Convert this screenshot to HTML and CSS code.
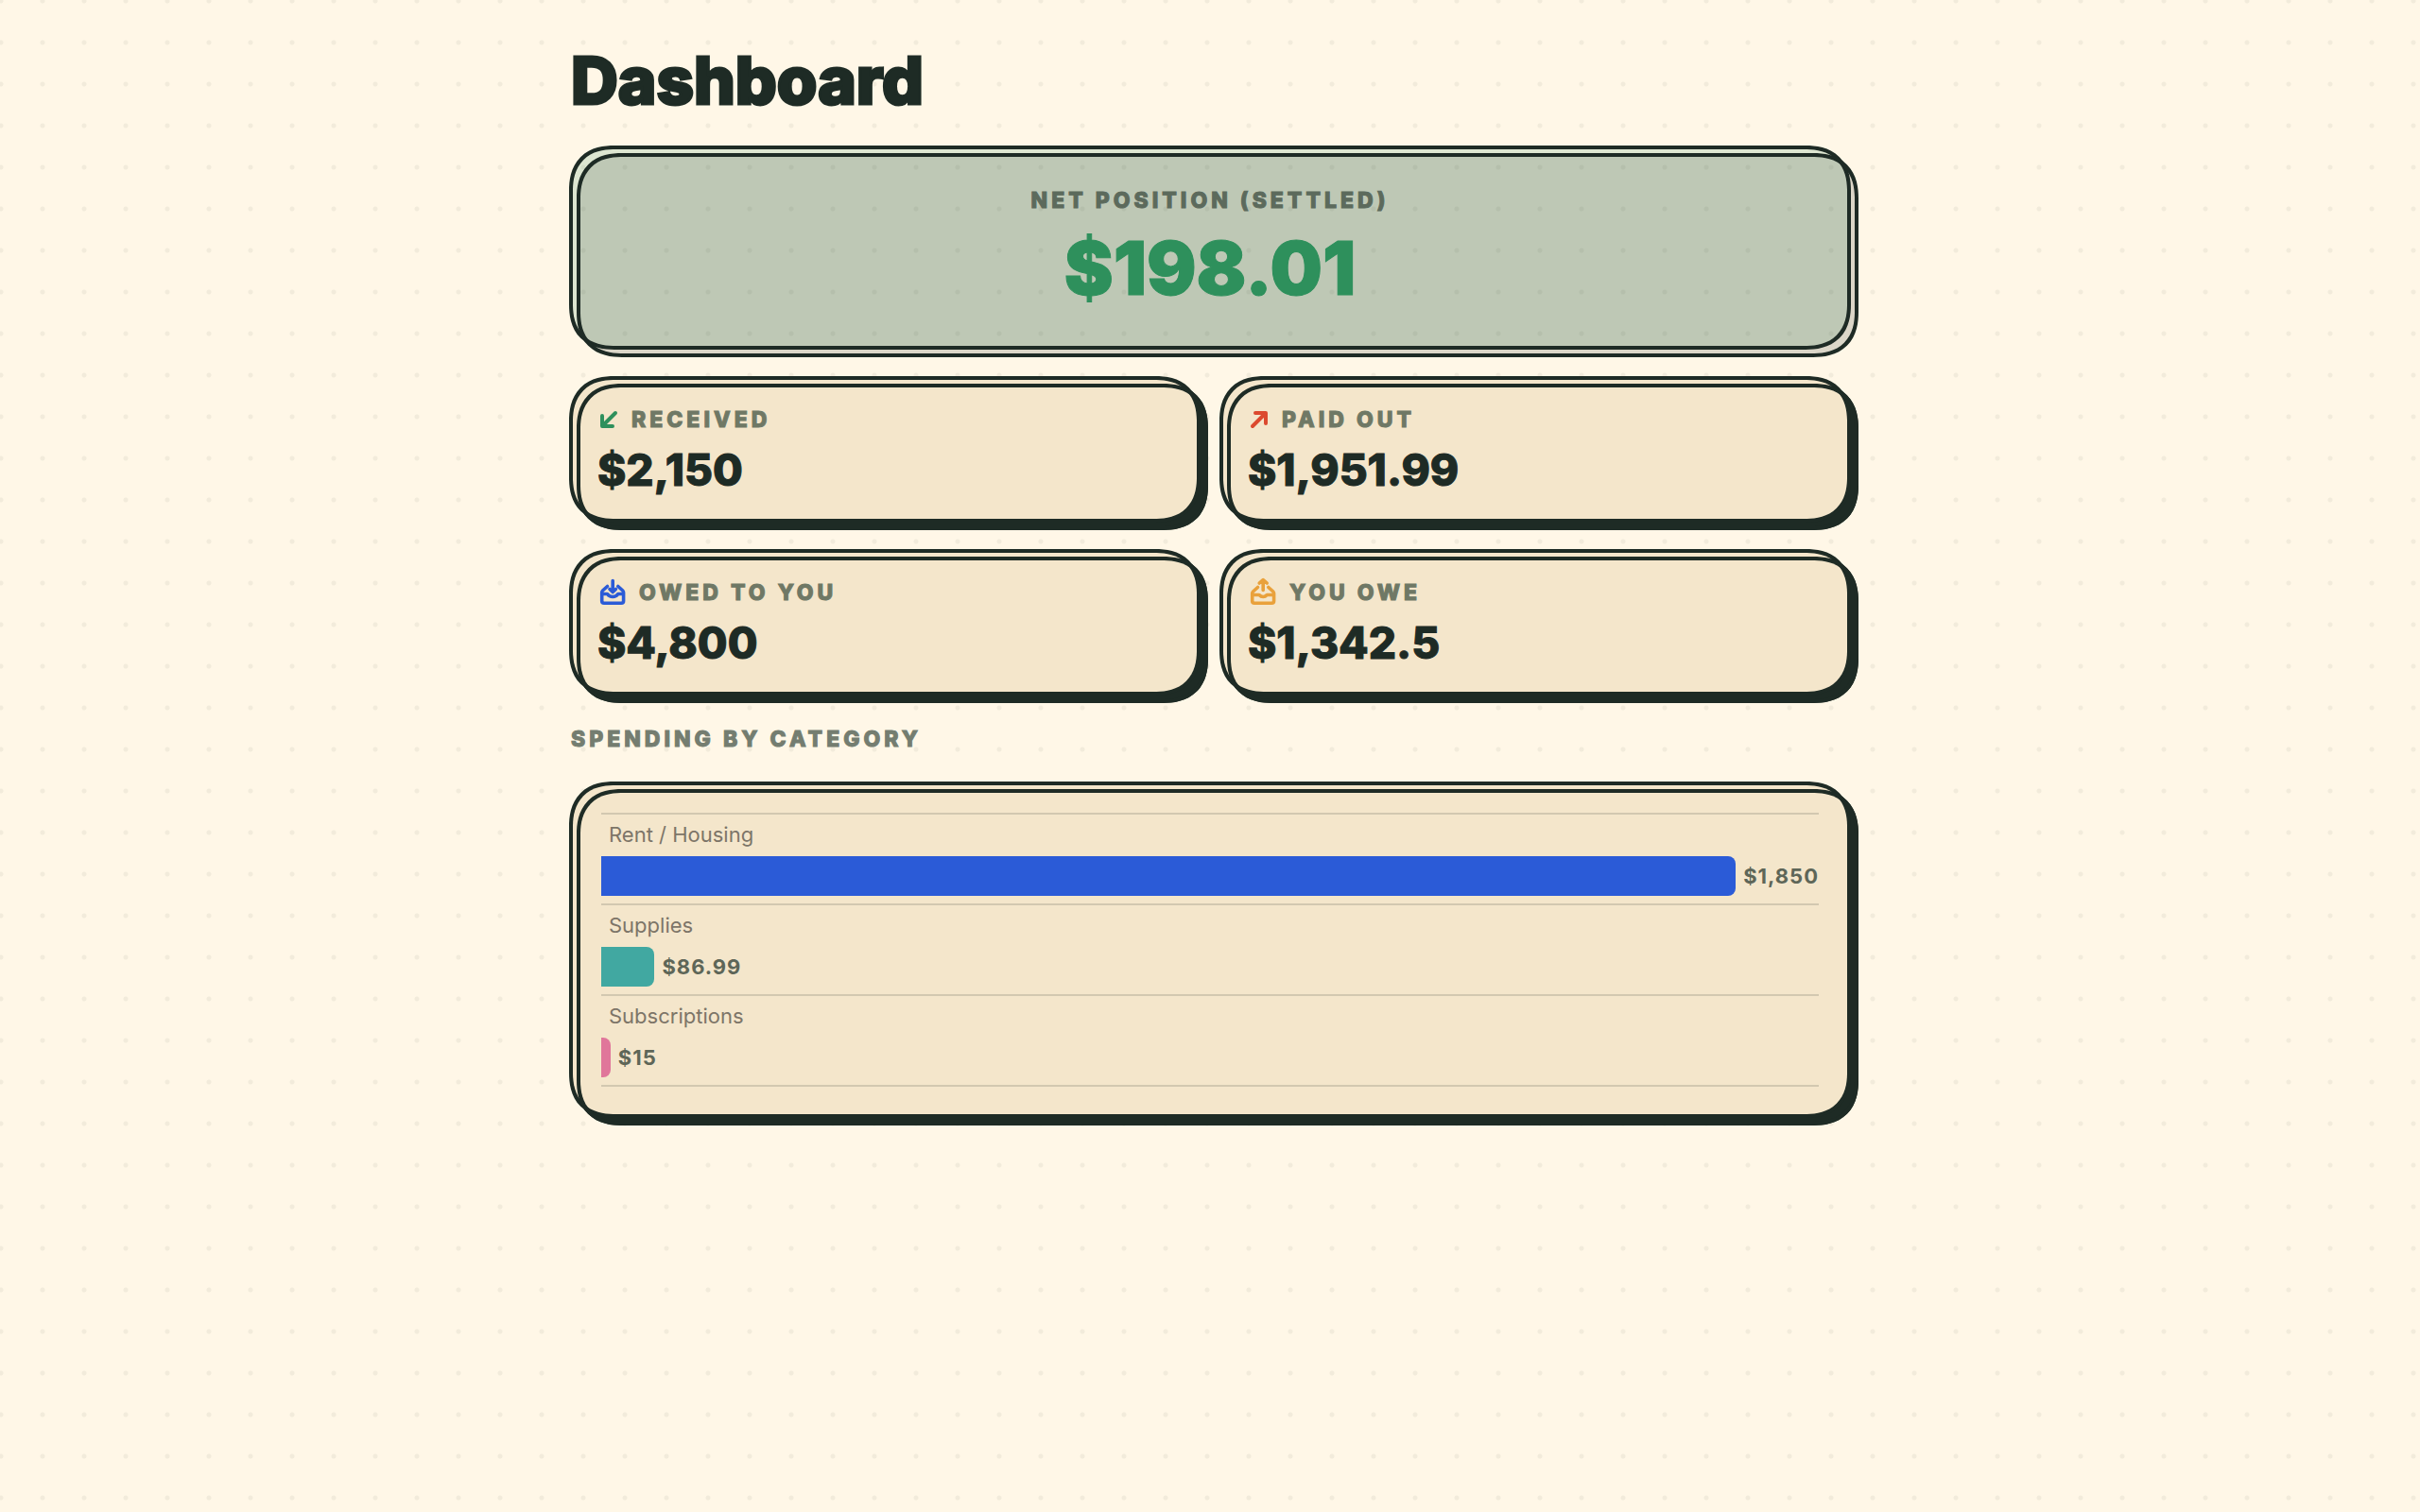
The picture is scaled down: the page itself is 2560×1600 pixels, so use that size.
FILE: index.html
```html
<!DOCTYPE html>
<html lang="en">
<head>
    <meta charset="UTF-8">
    <meta name="viewport" content="width=device-width, initial-scale=1.0">
    <title>Dashboard</title>
    <link rel="stylesheet" href="styles.css">
</head>
<body>
    <main class="container">
        <h1 class="page-title">Dashboard</h1>

        <section class="card card-net">
            <h2 class="label">Net position (settled)</h2>
            <p class="net-amount">$198.01</p>
        </section>

        <div class="stats">
            <section class="card stat">
                <h2 class="label">
                    <svg class="icon-arrow received" viewBox="0 0 24 24" aria-hidden="true"><path d="M19 5 L6 18 M5 8 V19 H16"/></svg>
                    Received
                </h2>
                <p class="amount">$2,150</p>
            </section>
            <section class="card stat">
                <h2 class="label">
                    <svg class="icon-arrow paid" viewBox="0 0 24 24" aria-hidden="true"><path d="M5 19 L18 6 M8 5 H19 V16"/></svg>
                    Paid out
                </h2>
                <p class="amount">$1,951.99</p>
            </section>
            <section class="card stat">
                <h2 class="label">
                    <svg class="icon-tray owed" viewBox="0 0 32 32" aria-hidden="true"><path d="M10.5 9.5 L5.5 14 Q4.7 15 4.7 16 V25 Q4.7 27.2 7 27.2 H25.3 Q27.6 27.2 27.6 25 V16 Q27.6 15 26.8 14 L21.8 9.5 M5 17.5 H10.5 Q12.5 20.5 16.2 20.5 Q19.8 20.5 21.8 17.5 H27.3 M16.2 3.5 V15 M13 12.5 L16.2 15.5 L19.4 12.5"/></svg>
                    Owed to you
                </h2>
                <p class="amount">$4,800</p>
            </section>
            <section class="card stat">
                <h2 class="label">
                    <svg class="icon-tray owe" viewBox="0 0 32 32" aria-hidden="true"><path d="M10.5 10.5 L5.5 15 Q4.7 16 4.7 17 V25 Q4.7 27.2 7 27.2 H25.3 Q27.6 27.2 27.6 25 V17 Q27.6 16 26.8 15 L21.8 10.5 M5 18.5 H12 Q13.8 20.5 16.2 20.5 Q18.5 20.5 20.3 18.5 H27.3 M16.2 13.5 V3 M12.2 6 L16.2 2.5 L20.2 6"/></svg>
                    You owe
                </h2>
                <p class="amount">$1,342.5</p>
            </section>
        </div>

        <h2 class="label section-title">Spending by category</h2>
        <section class="card card-chart">
            <ul class="chart">
                <li class="chart-row">
                    <span class="category">Rent / Housing</span>
                    <div class="bar-line"><div class="bar rent" style="width: 93.25%"></div><span class="value">$1,850</span></div>
                </li>
                <li class="chart-row">
                    <span class="category">Supplies</span>
                    <div class="bar-line"><div class="bar supplies" style="width: 4.38%"></div><span class="value">$86.99</span></div>
                </li>
                <li class="chart-row">
                    <span class="category">Subscriptions</span>
                    <div class="bar-line"><div class="bar subscriptions" style="width: 0.76%"></div><span class="value">$15</span></div>
                </li>
            </ul>
        </section>
    </main>
</body>
</html>
```
FILE: styles.css
```css
* {
    box-sizing: border-box;
}
body {
    margin: 0;
    font-family: Inter, sans-serif;
    color: #1e2b25;
    background-color: #fff7e7;
    background-image: radial-gradient(circle, #f2ebdb 2px, transparent 3px);
    background-size: 44px 44px;
    background-position: -21px -21px;
}
h1, h2, p, ul {
    margin: 0;
    padding: 0;
}
.container {
    max-width: 1356px;
    margin: 0 auto;
    padding: 44px 0;
}
/* the stroke thickens and rounds the heavy text */
.page-title, .net-amount, .amount, .label {
    font-weight: 800;
    stroke-linejoin: round;
    -webkit-text-stroke: 1px currentColor;
}
.page-title {
    font-size: 69px;
    line-height: 82px;
    margin-bottom: 28px;
    padding-left: 2px;
    -webkit-text-stroke-width: 3px;
}
.card {
    position: relative;
    isolation: isolate;
    border: 4px solid #1e2b25;
    border-radius: 48px;
    corner-shape: superellipse(1.25);
    background-color: #f4e6cb;
    box-shadow: 8px 8px 0 #1e2b25;
}
/* second outline, shifted down and right */
.card::before {
    content: "";
    position: absolute;
    z-index: -1;
    inset: 4px -12px -12px 4px;
    border: 4px solid #1e2b25;
    border-radius: 48px;
    corner-shape: superellipse(1.25);
    pointer-events: none;
}
.card-net {
    min-height: 216px;
    padding: 36px 26px;
    text-align: center;
    background-color: rgba(46, 144, 92, 0.16);
    box-shadow: none;
}
.card-net::before {
    background-color: rgba(30, 43, 37, 0.16);
}
.label {
    display: flex;
    align-items: center;
    gap: 12px;
    font-size: 23px;
    line-height: 36px;
    letter-spacing: 4px;
    text-transform: uppercase;
    color: #6f7865;
}
.card-net .label {
    justify-content: center;
    color: #5c6a5c;
}
.net-amount {
    font-size: 78px;
    line-height: 92px;
    font-weight: 900;
    margin-top: 8px;
    color: #2e905c;
}
.stats {
    display: grid;
    grid-template-columns: 1fr 1fr;
    gap: 28px 20px;
    margin-top: 28px;
}
.stat {
    min-height: 155px;
    padding: 24px 26px;
}
.amount {
    font-size: 46px;
    line-height: 56px;
    margin-top: 7px;
}
svg {
    fill: none;
    stroke: currentColor;
    stroke-linecap: round;
    stroke-linejoin: round;
    flex: none;
}
.icon-arrow {
    width: 24px;
    height: 24px;
    stroke-width: 4;
}
.icon-tray {
    width: 32px;
    height: 32px;
    stroke-width: 3.6;
}
.received {
    color: #2e905c;
}
.paid {
    color: #dc4a2f;
}
.owed {
    color: #2b5bd7;
}
.owe {
    color: #e9a13b;
}
.section-title {
    margin: 28px 0 27px;
    padding-left: 2px;
    color: #747d70;
}
.card-chart {
    padding: 29px 30px;
}
.chart {
    list-style: none;
    border-top: 2px solid #d2c8b0;
}
.chart-row {
    height: 96px;
    padding-top: 7px;
    border-bottom: 2px solid #d2c8b0;
}
.category {
    display: block;
    padding-left: 8px;
    font-size: 22px;
    line-height: 28px;
    color: #7d7568;
}
.bar-line {
    display: flex;
    align-items: center;
    gap: 8px;
    margin-top: 9px;
}
.bar {
    height: 42px;
    border-radius: 0 8px 8px 0;
}
.rent {
    background-color: #2b5bd7;
}
.supplies {
    background-color: #41a8a1;
}
.subscriptions {
    background-color: #e0769a;
}
.value {
    font-size: 22px;
    line-height: 28px;
    font-weight: 700;
    letter-spacing: 1px;
    color: #5e6658;
}
```
